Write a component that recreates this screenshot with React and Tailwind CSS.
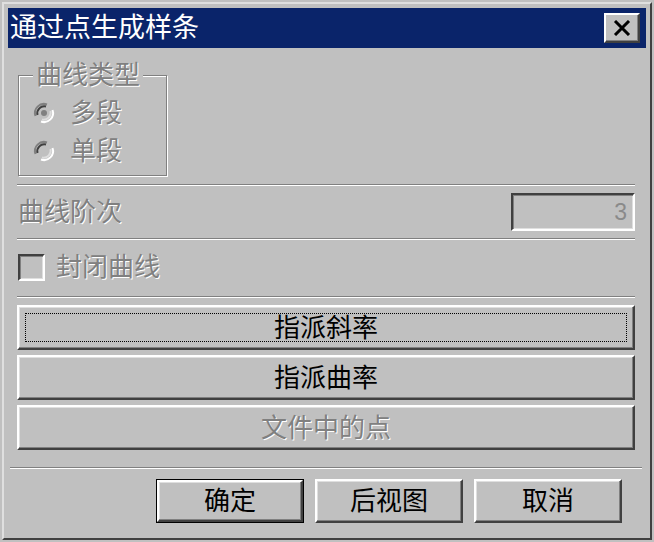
import React from 'react';

const cjk = "font-['Liberation_Sans','Noto_Sans_CJK_SC',sans-serif]";
const dim = 'text-[#808080] [text-shadow:1px_1px_0_#ffffff]';

function Separator({ className = '' }) {
  return <div className={`h-[2px] border-t border-t-[#808080] border-b border-b-white ${className}`} />;
}

function Radio({ checked }) {
  return (
    <svg width="24" height="24" viewBox="0 0 24 24" className="shrink-0">
      <circle cx="12" cy="12" r="9" fill="#c0c0c0" />
      <path d="M3.5 15 A9 9 0 0 1 15 3.5" fill="none" stroke="#808080" strokeWidth="2" />
      <path d="M5.5 14 A7 7 0 0 1 14 5.5" fill="none" stroke="#404040" strokeWidth="2" />
      <path d="M20.5 9 A9 9 0 0 1 9 20.5" fill="none" stroke="#ffffff" strokeWidth="2" />
      <path d="M18.5 10 A7 7 0 0 1 10 18.5" fill="none" stroke="#dfdfdf" strokeWidth="2" />
      {checked && <circle cx="12" cy="12" r="3" fill="#808080" />}
    </svg>
  );
}

function Button({ children, disabled, focused, isDefault, className = '' }) {
  const face = (
    <div className="relative flex h-full w-full items-center justify-center border-2 border-t-white border-l-white border-r-[#404040] border-b-[#404040] bg-[#c0c0c0] shadow-[inset_-1px_-1px_0_#808080,inset_1px_1px_0_#dfdfdf]">
      {focused && <span className="pointer-events-none absolute inset-[6px] border border-dotted border-black" />}
      <span className={`text-[26px] leading-none ${disabled ? dim : 'text-black'}`}>{children}</span>
    </div>
  );
  if (isDefault) {
    return <div className={`border border-black ${className}`}>{face}</div>;
  }
  return <div className={className}>{face}</div>;
}

export default function App() {
  return (
    <div className={`h-[542px] w-[654px] bg-[#c0c0c0] p-[2px] ${cjk}`}>
      <div className="flex h-full w-full flex-col border-2 border-t-[#dfdfdf] border-l-[#dfdfdf] border-r-[#404040] border-b-[#404040] p-[4px]">
        {/* title bar */}
        <div className="flex h-[40px] items-center justify-between bg-[#0a246a] pl-[2px] pr-[6px]">
          <span className="text-[27px] leading-none text-white">通过点生成样条</span>
          <div className="flex h-[30px] w-[36px] items-center justify-center border-2 border-t-white border-l-white border-r-[#404040] border-b-[#404040] bg-[#c0c0c0] shadow-[inset_-1px_-1px_0_#808080]">
            <svg width="18" height="16" viewBox="0 0 18 16">
              <path d="M2 1 L16 15 M16 1 L2 15" stroke="#000" strokeWidth="3" />
            </svg>
          </div>
        </div>

        <div className="flex flex-col pl-[9px] pr-[11px]">
          {/* curve type group */}
          <div className="relative mt-[27px] ml-[1px] w-[149px] border border-[#808080] pt-[18px] pb-[5px] pl-[13px] shadow-[inset_1px_1px_0_#ffffff,1px_1px_0_#ffffff]">
            <span className={`absolute -top-[15px] left-[14px] bg-[#c0c0c0] px-[3px] text-[26px] leading-[28px] ${dim}`}>曲线类型</span>
            <div className="flex h-[38px] items-center gap-[14px]">
              <Radio checked />
              <span className={`text-[26px] leading-none ${dim}`}>多段</span>
            </div>
            <div className="flex h-[38px] items-center gap-[14px]">
              <Radio />
              <span className={`text-[26px] leading-none ${dim}`}>单段</span>
            </div>
          </div>

          <Separator className="mt-[8px]" />

          {/* curve order */}
          <div className="mt-[7px] flex h-[38px] items-center justify-between pl-[1px]">
            <span className={`text-[26px] leading-none ${dim}`}>曲线阶次</span>
            <div className="flex h-[38px] w-[124px] items-center justify-end border-2 border-t-[#404040] border-l-[#404040] border-r-white border-b-white bg-[#c0c0c0] pr-[6px] shadow-[inset_1px_1px_0_#808080,inset_-1px_-1px_0_#dfdfdf]">
              <span className="text-[23px] leading-none text-[#8a8a8a]">3</span>
            </div>
          </div>

          <Separator className="mt-[7px]" />

          {/* closed curve */}
          <div className="mt-[13px] flex h-[28px] items-center gap-[11px] pl-[1px]">
            <div className="h-[27px] w-[27px] border-2 border-t-[#404040] border-l-[#404040] border-r-white border-b-white bg-[#c0c0c0] shadow-[inset_1px_1px_0_#808080,inset_-1px_-1px_0_#dfdfdf]" />
            <span className={`text-[26px] leading-none ${dim}`}>封闭曲线</span>
          </div>

          <Separator className="mt-[15px]" />

          <div className="mt-[7px] flex flex-col gap-[5px]">
            <Button focused className="h-[45px]">指派斜率</Button>
            <Button className="h-[45px]">指派曲率</Button>
            <Button disabled className="h-[45px]">文件中的点</Button>
          </div>

          <Separator className="-mx-[7px] mt-[17px]" />

          <div className="mt-[10px] flex justify-end gap-[11px] pr-[13px]">
            <Button isDefault className="h-[44px] w-[148px]">确定</Button>
            <Button className="h-[44px] w-[148px]">后视图</Button>
            <Button className="h-[44px] w-[148px]">取消</Button>
          </div>
        </div>
      </div>
    </div>
  );
}
